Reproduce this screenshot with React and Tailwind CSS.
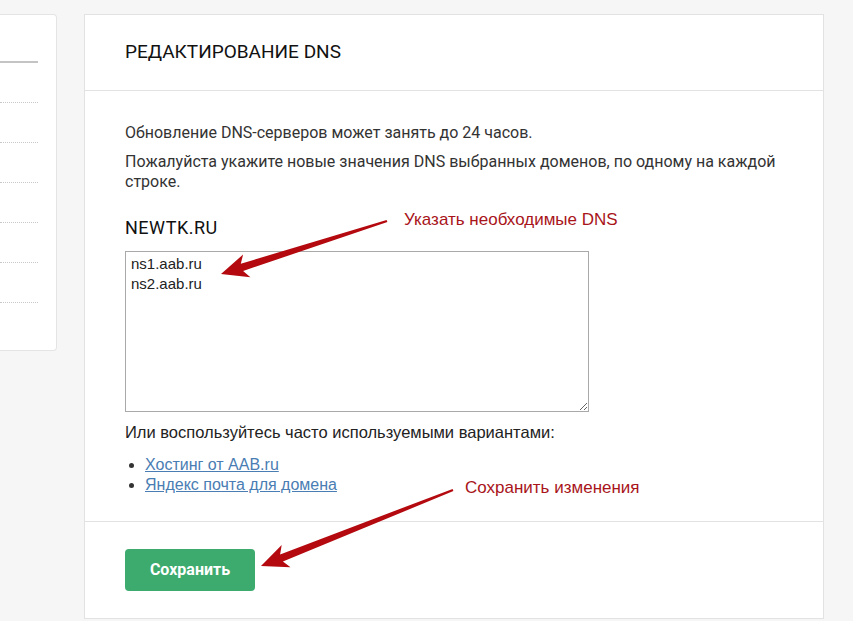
import * as React from "react";

// builds a tapered arrow polygon from tail (tx,ty) to tip (px,py)
function arrowPoints(tx, ty, px, py, headLen = 27, headW = 12, shaftW = 3.8, tailW = 1.2) {
  const dx = px - tx;
  const dy = py - ty;
  const len = Math.hypot(dx, dy);
  const ux = dx / len;
  const uy = dy / len;
  const nx = -uy;
  const ny = ux;
  const bx = px - ux * headLen;
  const by = py - uy * headLen;
  const nbx = bx + ux * 5;
  const nby = by + uy * 5;
  const pts = [
    [tx + nx * tailW, ty + ny * tailW],
    [nbx + nx * shaftW, nby + ny * shaftW],
    [bx + nx * headW, by + ny * headW],
    [px, py],
    [bx - nx * headW, by - ny * headW],
    [nbx - nx * shaftW, nby - ny * shaftW],
    [tx - nx * tailW, ty - ny * tailW],
  ];
  return pts.map((p) => p.map((v) => v.toFixed(1)).join(",")).join(" ");
}

const SideCard = () => (
  <div className="w-[57px] h-[337px] bg-white border border-l-0 border-[#e4e4e4] rounded-r-[4px] shrink-0">
    <div className="mt-[46px] w-[38px] h-[2px] bg-[#c4c4c4]" />
    {[0, 1, 2, 3, 4, 5].map((i) => (
      <div key={i} className="mt-[39px] w-[38px] border-t border-dotted border-[#c8c8c8]" />
    ))}
  </div>
);

const sans = { fontFamily: "'Liberation Sans', Arial, sans-serif" };

export default function App() {
  return (
    <div
      className="relative w-[853px] h-[621px] overflow-hidden bg-[#f6f6f6] flex items-start gap-[27px] pt-[14px]"
      style={{ fontFamily: "Roboto, 'Liberation Sans', sans-serif" }}
    >
      <SideCard />

      {/* Main card */}
      <div className="w-[740px] h-[605px] bg-white border border-[#e2e2e2] shrink-0 flex flex-col">
        <div className="h-[76px] border-b border-[#e2e2e2] flex items-center px-[40px]">
          <h1 className="text-[19px] text-[#111] font-normal">РЕДАКТИРОВАНИЕ DNS</h1>
        </div>

        <div className="px-[40px] pt-[32px] pb-[26px] text-[16px] leading-[20px] text-[#333]">
          <p>Обновление DNS-серверов может занять до 24 часов.</p>
          <p className="mt-[9px]">
            Пожалуйста укажите новые значения DNS выбранных доменов, по одному на каждой строке.
          </p>

          <div className="mt-[26px] text-[18px] text-[#111] tracking-[0.5px]">NEWTK.RU</div>

          <textarea
            readOnly
            defaultValue={"ns1.aab.ru\nns2.aab.ru"}
            className="mt-[13px] block w-[464px] h-[161px] border border-[#a9a9a9] px-[5px] pt-[2px] text-[15px] leading-[20px] text-[#222] resize-y outline-none"
            style={sans}
          />

          <div style={sans}>
            <p className="mt-[10px] text-[16.5px] text-[#222]">Или воспользуйтесь часто используемыми вариантами:</p>
            <ul className="mt-[13px] list-disc pl-[20px] marker:text-[#333]">
              <li>
                <a href="#" className="text-[#4a7db3] underline">Хостинг от AAB.ru</a>
              </li>
              <li>
                <a href="#" className="text-[#4a7db3] underline">Яндекс почта для домена</a>
              </li>
            </ul>
          </div>
        </div>

        <div className="border-t border-[#e2e2e2] px-[40px] pt-[27px]">
          <button className="w-[130px] h-[42px] rounded-[4px] bg-[#3dab6e] text-white text-[16px] font-bold">
            Сохранить
          </button>
        </div>
      </div>

      {/* annotations */}
      <div className="absolute left-[404px] top-[207px] text-[17px] text-[#a8141a]" style={sans}>
        Указать необходимые DNS
      </div>
      <div className="absolute left-[465px] top-[475px] text-[17px] text-[#a8141a]" style={sans}>
        Сохранить изменения
      </div>
      <svg className="absolute left-0 top-0 pointer-events-none" width="853" height="621">
        <polygon points={arrowPoints(387, 221, 221, 274)} fill="#b3090f" />
        <polygon points={arrowPoints(453, 490, 261, 566)} fill="#b3090f" />
      </svg>
    </div>
  );
}
